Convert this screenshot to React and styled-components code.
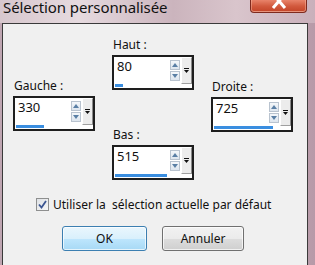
import React from "react";
import styled, { createGlobalStyle } from "styled-components";

const Global = createGlobalStyle`
  html, body { margin: 0; padding: 0; }
  body { width: 315px; height: 265px; overflow: hidden; font-family: "Noto Sans", "Open Sans", sans-serif; }
`;

const Window = styled.div`
  width: 315px;
  height: 265px;
  display: flex;
  flex-direction: column;
  background: linear-gradient(90deg, #bfa6b2 0%, #d8c6cd 30%, #cdb6c0 60%, #c2a6b3 85%, #b79aa8 100%);
  overflow: hidden;
`;

const TitleBar = styled.div`
  height: 23px;
  display: flex;
  align-items: flex-start;
  justify-content: space-between;
  padding: 0 8px 0 3px;
  background: linear-gradient(90deg, #d7c7cd 0%, #e6dadf 25%, #cbb4bd 55%, #d9c5cc 75%, #c9b0bb 100%);
`;

const Title = styled.div`
  font-size: 15px;
  line-height: 17px;
  margin-top: -1px;
  color: #111;
  letter-spacing: -0.1px;
`;

const CloseButton = styled.div`
  width: 57px;
  height: 13px;
  box-sizing: border-box;
  border: 1px solid #7e2a1e;
  border-top: none;
  border-radius: 0 0 4px 4px;
  background: linear-gradient(180deg, #e8836a 0%, #d25a3e 50%, #c24327 100%);
  box-shadow: inset 0 -1px 0 rgba(255, 200, 180, 0.6), inset 1px 0 0 rgba(255, 200, 180, 0.4), inset -1px 0 0 rgba(255, 200, 180, 0.4);
  display: flex;
  justify-content: center;
  overflow: hidden;
`;

const Body = styled.div`
  flex: 1;
  display: flex;
  padding: 0 7px 0 2px;
`;

const Content = styled.div`
  flex: 1;
  background: #f0f0f0;
  border: 1px solid #3a3a3a;
  border-bottom: none;
  display: flex;
  flex-direction: column;
`;

const Fields = styled.div`
  display: flex;
  padding: 0 0 0 10px;
`;

const Column = styled.div`
  display: flex;
  flex-direction: column;
  width: ${(p) => p.$w}px;
  padding-top: ${(p) => p.$top}px;
  margin-right: ${(p) => p.$mr || 0}px;
  gap: ${(p) => p.$gap || 0}px;
`;

const Field = styled.div`
  display: flex;
  flex-direction: column;
`;

const Label = styled.div`
  font-size: 12px;
  line-height: 15px;
  height: 15px;
  color: #111;
  padding-left: 1px;
`;

const SpinBox = styled.div`
  margin-top: ${(p) => p.$lt}px;
  width: 82px;
  height: 35px;
  box-sizing: border-box;
  border: 2px solid #1e1e1e;
  background: #fff;
  display: flex;
  flex-direction: column;
`;

const SpinRow = styled.div`
  flex: 1;
  display: flex;
  align-items: stretch;
`;

const Value = styled.div`
  flex: 1;
  font-size: 13px;
  line-height: 15px;
  padding: 2px 0 0 3px;
  color: #111;
`;

const Arrows = styled.div`
  width: 10px;
  display: flex;
  flex-direction: column;
  justify-content: center;
  gap: 1px;
  margin-right: 1px;
`;

const ArrowBtn = styled.div`
  width: 10px;
  height: 10px;
  box-sizing: border-box;
  border: 1px solid #b9c3cf;
  background: linear-gradient(180deg, #f4f7fa 0%, #dde5ee 100%);
  display: flex;
  align-items: center;
  justify-content: center;
`;

const DropBtn = styled.div`
  width: 11px;
  box-sizing: border-box;
  background: #ececec;
  border-left: 1px solid #ffffff;
  border-top: 1px solid #ffffff;
  border-right: 1px solid #8a8a8a;
  border-bottom: 1px solid #a0a0a0;
  display: flex;
  align-items: center;
  justify-content: center;
`;

const BarTrack = styled.div`
  height: 4px;
  padding: 0 0 0 1px;
  display: flex;
  align-items: flex-start;
`;

const Bar = styled.div`
  height: 3px;
  background: #3a8ee0;
`;

const CheckRow = styled.div`
  display: flex;
  align-items: center;
  margin: 17px 0 0 33px;
  gap: 4px;
`;

const CheckBox = styled.div`
  width: 13px;
  height: 13px;
  box-sizing: border-box;
  border: 1px solid #8e8f8f;
  background: linear-gradient(135deg, #dfe2e6 0%, #f6f6f6 100%);
  display: flex;
  align-items: center;
  justify-content: center;
`;

const CheckText = styled.div`
  font-size: 12px;
  line-height: 15px;
  color: #111;
  white-space: pre;
`;

const Buttons = styled.div`
  display: flex;
  gap: 15px;
  margin: 14px 0 0 59px;
`;

const Button = styled.div`
  width: ${(p) => p.$w}px;
  height: 25px;
  box-sizing: border-box;
  border-radius: 3px;
  border: 1px solid ${(p) => (p.$primary ? "#3c7fb1" : "#707070")};
  background: ${(p) =>
    p.$primary
      ? "linear-gradient(180deg, #eaf6fd 0%, #d9f0fc 50%, #bee6fd 51%, #a7d9f5 100%)"
      : "linear-gradient(180deg, #f2f2f2 0%, #ebebeb 50%, #dddddd 51%, #cfcfcf 100%)"};
  box-shadow: inset 0 0 0 1px rgba(255, 255, 255, 0.7);
  display: flex;
  align-items: center;
  justify-content: center;
  font-size: 12px;
  color: #111;
`;

const UpArrow = () => (
  <svg width="6" height="4" viewBox="0 0 6 4">
    <path d="M0 4 L3 0 L6 4 Z" fill="#5a7fa5" />
  </svg>
);
const DownArrow = () => (
  <svg width="6" height="4" viewBox="0 0 6 4">
    <path d="M0 0 L6 0 L3 4 Z" fill="#5a7fa5" />
  </svg>
);
const DropIcon = () => (
  <svg width="5" height="5" viewBox="0 0 5 5">
    <rect x="0" y="0" width="5" height="1" fill="#111" />
    <path d="M0 2 L5 2 L2.5 5 Z" fill="#111" />
  </svg>
);

const Spin = ({ label, value, bar, lt }) => (
  <Field>
    <Label>{label}</Label>
    <SpinBox $lt={lt}>
      <SpinRow>
        <Value>{value}</Value>
        <Arrows>
          <ArrowBtn>
            <UpArrow />
          </ArrowBtn>
          <ArrowBtn>
            <DownArrow />
          </ArrowBtn>
        </Arrows>
        <DropBtn>
          <DropIcon />
        </DropBtn>
      </SpinRow>
      <BarTrack>
        <Bar style={{ width: bar }} />
      </BarTrack>
    </SpinBox>
  </Field>
);

export default function App() {
  return (
    <>
      <Global />
      <Window>
        <TitleBar>
          <Title>Sélection personnalisée</Title>
          <CloseButton>
            <svg width="20" height="12" viewBox="0 0 20 12">
              <path d="M4 -6 L16 8 M16 -6 L4 8" stroke="#fff" strokeWidth="3" fill="none" />
            </svg>
          </CloseButton>
        </TitleBar>
        <Body>
          <Content>
            <Fields>
              <Column $w={82} $top={54} $mr={17}>
                <Spin label="Gauche :" value="330" bar={28} lt={3} />
              </Column>
              <Column $w={82} $top={13} $mr={17} $gap={37}>
                <Spin label="Haut :" value="80" bar={8} lt={3} />
                <Spin label="Bas :" value="515" bar={52} lt={3} />
              </Column>
              <Column $w={82} $top={55}>
                <Spin label="Droite :" value="725" bar={59} lt={3} />
              </Column>
            </Fields>
            <CheckRow>
              <CheckBox>
                <svg width="9" height="9" viewBox="0 0 9 9">
                  <path d="M1 4.5 L3.5 7.5 L8 1" stroke="#3b5591" strokeWidth="1.8" fill="none" />
                </svg>
              </CheckBox>
              <CheckText>Utiliser la  sélection actuelle par défaut</CheckText>
            </CheckRow>
            <Buttons>
              <Button $primary $w={85}>OK</Button>
              <Button $w={82}>Annuler</Button>
            </Buttons>
          </Content>
        </Body>
      </Window>
    </>
  );
}
